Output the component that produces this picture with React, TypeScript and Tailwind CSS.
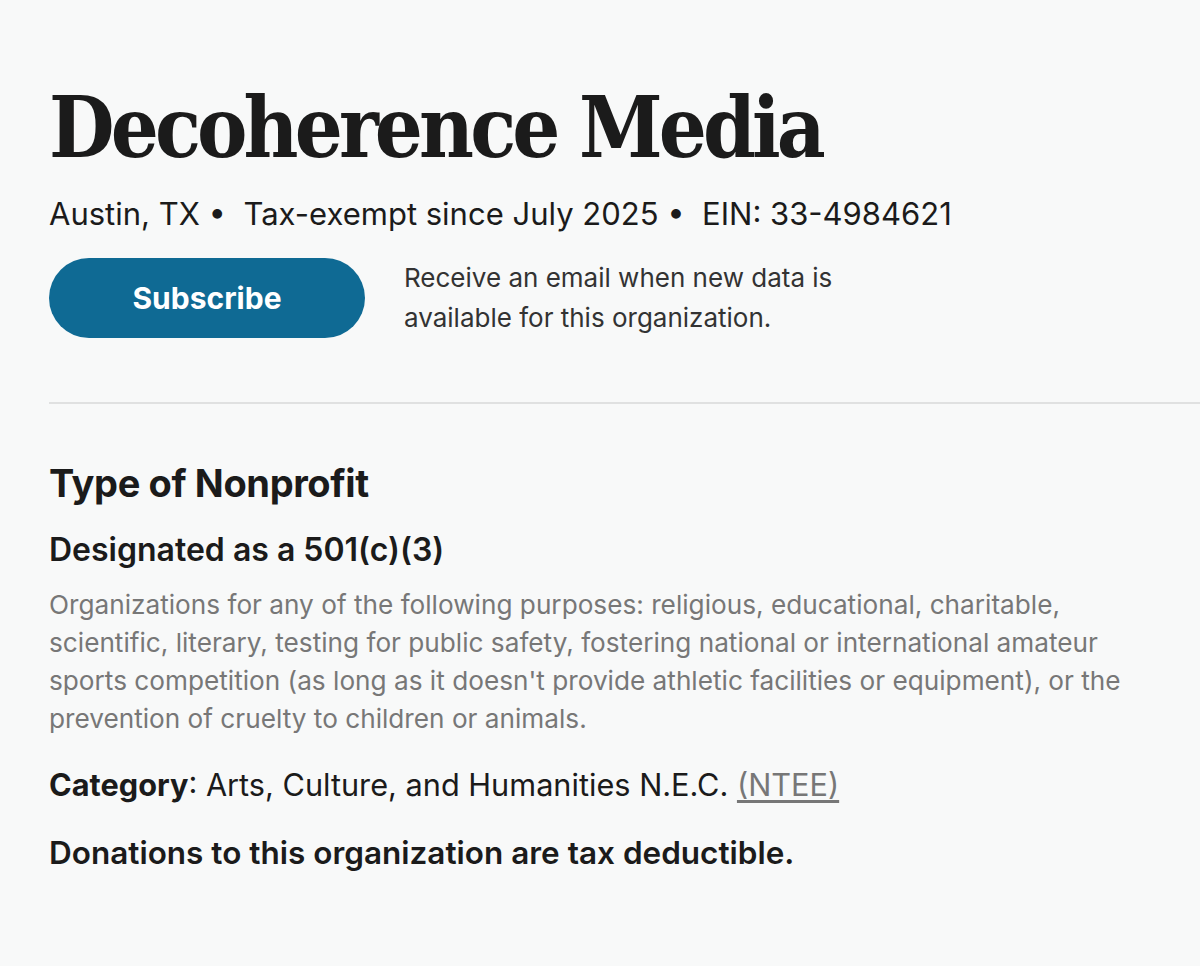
export default function App() {
  return (
    <div className="min-h-screen bg-[#f8f9f9] font-['Inter',sans-serif] text-[#1b1b1b]">
      <div className="pl-[49px] pt-[80px]">
        <h1 className="font-['DejaVu_Serif_Condensed','DejaVu_Serif',serif] text-[84px] font-bold leading-[96px] tracking-[-0.046em] text-[#1b1b1b]">
          Decoherence Media
        </h1>
        <p className="mt-[18px] text-[31px] leading-[40px]">
          Austin, TX &bull;&nbsp; Tax-exempt since July 2025 &bull;&nbsp; EIN: 33-4984621
        </p>
        <div className="mt-[24px] flex items-center gap-[39px]">
          <button className="h-[80px] w-[316px] rounded-full bg-[#0f6a94] text-[30px] font-bold text-white">
            Subscribe
          </button>
          <p className="text-[26px] leading-[40px] text-[#333]">
            Receive an email when new data is
            <br />
            available for this organization.
          </p>
        </div>
      </div>
      <div className="ml-[49px] mt-[64px] h-[2px] bg-[#e0e1e1]" />
      <div className="pl-[49px] pt-[55px]">
        <h2 className="text-[38px] font-bold leading-[48px] tracking-[-0.01em]">Type of Nonprofit</h2>
        <h3 className="mt-[23px] text-[32px] font-semibold leading-[40px]">Designated as a 501(c)(3)</h3>
        <p className="mt-[16px] whitespace-nowrap text-[26.2px] leading-[38px] text-[#777]">
          Organizations for any of the following purposes: religious, educational, charitable,
          <br />
          scientific, literary, testing for public safety, fostering national or international amateur
          <br />
          sports competition (as long as it doesn't provide athletic facilities or equipment), or the
          <br />
          prevention of cruelty to children or animals.
        </p>
        <p className="mt-[27px] text-[30.7px] leading-[40px]">
          <span className="font-bold">Category</span>: Arts, Culture, and Humanities N.E.C.{' '}
          <a href="#" className="text-[#777] underline decoration-[#777] underline-offset-4">(NTEE)</a>
        </p>
        <p className="mt-[28px] text-[31.5px] font-semibold leading-[40px]">
          Donations to this organization are tax deductible.
        </p>
      </div>
    </div>
  );
}
